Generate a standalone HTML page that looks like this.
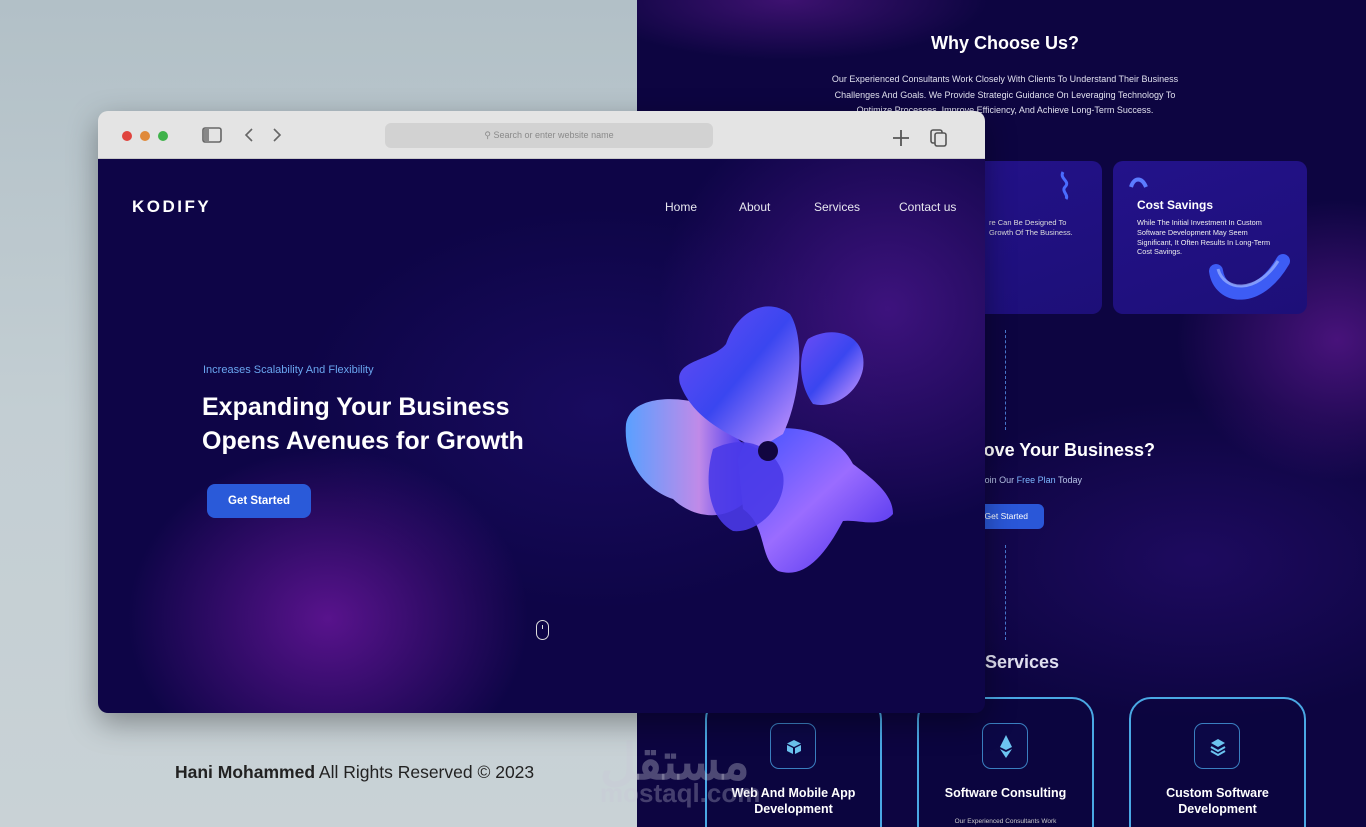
<!DOCTYPE html>
<html><head><meta charset="utf-8"><style>
*{margin:0;padding:0;box-sizing:border-box}
body{width:1366px;height:827px;overflow:hidden;position:relative;font-family:"Liberation Sans",sans-serif;background:linear-gradient(180deg,#b2c0c7 0%,#c3ced3 50%,#c9d2d6 100%)}
.right{position:absolute;left:637px;top:0;width:729px;height:827px;background:
radial-gradient(ellipse 160px 140px at 700px 340px,rgba(120,30,170,.55),transparent),
radial-gradient(ellipse 200px 60px at 150px 0px,rgba(110,30,160,.5),transparent),
radial-gradient(ellipse 300px 160px at 560px 560px,rgba(60,20,150,.35),transparent),
#0d0541;color:#fff;overflow:hidden}
.r{position:absolute}
.card{position:absolute;top:161px;height:153px;border-radius:10px;background:linear-gradient(160deg,#23128a,#1d0f78)}
.svc{position:absolute;top:697px;width:177px;height:160px;border:2px solid #4aa8e4;border-radius:22px;background:rgba(10,5,60,.4)}
.ib{position:absolute;left:63px;top:24px;width:46px;height:46px;border:1px solid #3a7fc0;border-radius:9px;background:#0c0846}
.st{position:absolute;top:86px;left:0;width:100%;text-align:center;font-weight:bold;font-size:12.5px;line-height:16px}
.win{position:absolute;left:98px;top:111px;width:887px;height:602px;border-radius:10px;overflow:hidden;box-shadow:0 10px 30px rgba(0,0,0,.35)}
.bar{position:absolute;left:0;top:0;width:100%;height:48px;background:#e4e4e4;border-bottom:1px solid #c8c8c8}
.content{position:absolute;left:0;top:48px;width:100%;height:554px;background:
radial-gradient(ellipse 200px 170px at 230px 460px,rgba(120,25,170,.7),transparent),
radial-gradient(ellipse 230px 220px at 790px 150px,rgba(100,30,170,.55),transparent),
radial-gradient(ellipse 300px 200px at 500px 250px,rgba(40,20,130,.4),transparent),
#0e0547;color:#fff}
.nav{position:absolute;top:41px;font-size:12px;color:#e8e8f0}
.dot{position:absolute;top:20px;width:10px;height:10px;border-radius:50%}
</style></head><body>
<div class="right">
 <div class="r" style="left:0;width:736px;top:33px;text-align:center;font-weight:bold;font-size:18px">Why Choose Us?</div>
 <div class="r" style="left:180px;width:376px;top:72px;text-align:center;font-size:9px;line-height:15.6px;color:#e0e0ee">Our Experienced Consultants Work Closely With Clients To Understand Their Business Challenges And Goals. We Provide Strategic Guidance On Leveraging Technology To Optimize Processes, Improve Efficiency, And Achieve Long-Term Success.</div>
 <div class="card" style="left:270px;width:195px">
  <div class="r" style="left:82px;top:57px;font-size:7.5px;line-height:10px;color:#ddd">re Can Be Designed To<br>Growth Of The Business.</div>
  <svg class="r" style="left:150px;top:8px" width="20" height="32"><path d="M6 3 C2 10,14 12,8 18 C4 22,12 26,9 30" stroke="#4a6cff" stroke-width="3" fill="none"/></svg>
  <svg class="r" style="left:340px;top:95px" width="40" height="60"><path d="M2 5 C20 10,30 30,10 52" stroke="#6d8cff" stroke-width="6" fill="none" opacity=".8"/></svg>
 </div>
 <div class="card" style="left:476px;width:194px">
  <svg class="r" style="left:15px;top:14px" width="22" height="16"><path d="M3 12 C6 2,14 2,18 12" stroke="#5c7cff" stroke-width="4" fill="none"/></svg>
  <div class="r" style="left:24px;top:37px;font-weight:bold;font-size:12px">Cost Savings</div>
  <div class="r" style="left:24px;top:57px;font-size:7.3px;line-height:9.8px;color:#eee;width:140px">While The Initial Investment In Custom Software Development May Seem Significant, It Often Results In Long-Term Cost Savings.</div>
  <svg class="r" style="left:95px;top:88px" width="85" height="60"><path d="M8 22 C12 50,50 55,75 12" stroke="#3d5cf5" stroke-width="14" fill="none" stroke-linecap="round"/><path d="M10 20 C16 42,48 46,70 12" stroke="#9fb6ff" stroke-width="3" fill="none" opacity=".7"/></svg>
 </div>
 <div class="r" style="left:368px;top:330px;height:100px;border-left:1px dashed #4a7ad0"></div>
 <div class="r" style="left:368px;top:545px;height:95px;border-left:1px dashed #4a7ad0"></div>
 <div class="r" style="right:211px;top:440px;font-weight:bold;font-size:18px;white-space:nowrap">Ready To Improve Your Business?</div>
 <div class="r" style="right:284px;top:475px;font-size:9px;color:#b8c4e8;white-space:nowrap">Join Our <span style="color:#7db7ff">Free Plan</span> Today</div>
 <div class="r" style="left:320px;top:504px;width:87px;height:25px;border-radius:6px;background:#2a57d8;font-size:8.5px;line-height:25px;text-align:right;padding-right:16px">Get Started</div>
 <div class="r" style="left:311px;top:652px;font-weight:bold;font-size:18px;color:#e0e0f0">Our Services</div>
 <div class="svc" style="left:68px"><div class="ib"><svg style="position:absolute;left:15px;top:15px" width="16" height="16"><path d="M8 1 L15 4.5 L8 8 L1 4.5Z M1 6 L7 9 L7 15 L1 12Z M9 9 L15 6 L15 12 L9 15Z" fill="#6cc4f0"/></svg></div><div class="st">Web And Mobile App<br>Development</div></div>
 <div class="svc" style="left:280px"><div class="ib"><svg style="position:absolute;left:16px;top:11px" width="14" height="24"><path d="M7 0 L13 12 L7 15 L1 12Z M1 14 L7 17 L13 14 L7 23Z" fill="#6cc4f0"/></svg></div><div class="st">Software Consulting</div><div class="r" style="top:118px;width:100%;text-align:center;font-size:6.5px;line-height:9px;color:#ccc">Our Experienced Consultants Work<br>Closely With Clients To Understand</div></div>
 <div class="svc" style="left:492px"><div class="ib"><svg style="position:absolute;left:15px;top:14px" width="16" height="18"><path d="M8 1 L15 5 L8 9 L1 5Z" fill="#6cc4f0"/><path d="M1 9 L8 13 L15 9 M1 13 L8 17 L15 13" stroke="#6cc4f0" stroke-width="2" fill="none"/></svg></div><div class="st">Custom Software<br>Development</div></div>
</div>
<div style="position:absolute;left:600px;top:722px;font-size:50px;font-weight:bold;color:rgba(200,200,215,.35);font-family:'Noto Sans CJK SC',sans-serif">مستقل</div>
<div style="position:absolute;left:600px;top:778px;font-size:26px;font-weight:bold;color:rgba(200,200,215,.3)">mostaql.com</div>

<div class="win">
 <div class="bar">
  <div class="dot" style="left:24px;background:#e0443e"></div>
  <div class="dot" style="left:42px;background:#e08a3a"></div>
  <div class="dot" style="left:60px;background:#3fb24a"></div>
  <svg style="position:absolute;left:104px;top:16px" width="20" height="16"><rect x="1" y="1" width="18" height="14" rx="2" fill="none" stroke="#666" stroke-width="1.6"/><rect x="2" y="2" width="5" height="12" fill="#888"/></svg>
  <svg style="position:absolute;left:145px;top:16px" width="40" height="16"><path d="M9 2 L3 8 L9 14" stroke="#666" stroke-width="1.6" fill="none"/><path d="M31 2 L37 8 L31 14" stroke="#666" stroke-width="1.6" fill="none"/></svg>
  <div style="position:absolute;left:287px;top:12px;width:328px;height:25px;border-radius:6px;background:#d2d2d2;text-align:center;font-size:9px;line-height:25px;color:#8a8a8a">⚲ Search or enter website name</div>
  <svg style="position:absolute;left:794px;top:18px" width="18" height="18"><path d="M9 1 V17 M1 9 H17" stroke="#555" stroke-width="1.8"/></svg>
  <svg style="position:absolute;left:831px;top:17px" width="20" height="20"><rect x="2" y="2" width="11" height="13" rx="2" fill="none" stroke="#555" stroke-width="1.6"/><rect x="6" y="5" width="11" height="13" rx="2" fill="#e4e4e4" stroke="#555" stroke-width="1.6"/></svg>
 </div>
 <div class="content">
  <div style="position:absolute;left:34px;top:38px;font-weight:bold;font-size:17px;letter-spacing:2.5px">KODIFY</div>
  <div class="nav" style="left:567px">Home</div>
  <div class="nav" style="left:641px">About</div>
  <div class="nav" style="left:716px">Services</div>
  <div class="nav" style="left:801px">Contact us</div>
  <div style="position:absolute;left:105px;top:205px;font-size:11px;color:#6aa6f0">Increases Scalability And Flexibility</div>
  <div style="position:absolute;left:104px;top:231px;font-weight:bold;font-size:25px;line-height:34px">Expanding Your Business<br>Opens Avenues for Growth</div>
  <div style="position:absolute;left:109px;top:325px;width:104px;height:34px;border-radius:8px;background:#2a5ad9;font-size:11.5px;font-weight:bold;line-height:34px;text-align:center">Get Started</div>
  <div style="position:absolute;left:438px;top:461px;width:13px;height:20px;border:1.5px solid #ddd;border-radius:7px"><div style="position:absolute;left:4.5px;top:4px;width:1.5px;height:4px;background:#ddd"></div></div>
  <svg style="position:absolute;left:520px;top:140px" width="290" height="280">
   <defs>
    <linearGradient id="g1" x1="0" y1="0" x2="1" y2="1"><stop offset="0" stop-color="#3a50ff"/><stop offset=".5" stop-color="#9a6cff"/><stop offset="1" stop-color="#4028e8"/></linearGradient>
    <linearGradient id="g2" x1="0" y1="0" x2="1" y2="0"><stop offset="0" stop-color="#5aa0ff"/><stop offset=".6" stop-color="#c08ae8"/><stop offset="1" stop-color="#3a2ef0"/></linearGradient>
    <linearGradient id="g3" x1="0" y1="0" x2="1" y2="1"><stop offset="0" stop-color="#6a4cf5"/><stop offset=".5" stop-color="#3a46f0"/><stop offset="1" stop-color="#d49cff"/></linearGradient>
   </defs>
   <path d="M190 40 C215 25,250 35,245 70 C240 95,215 110,195 105 C180 85,180 55,190 40Z" fill="url(#g3)"/>
   <path d="M8 125 C12 100,50 95,85 105 L130 150 L125 205 C100 225,70 215,55 200 C25 190,5 160,8 125Z" fill="url(#g2)"/>
   <path d="M130 135 C175 120,220 135,235 165 C255 180,275 195,275 215 C262 230,240 220,225 222 C205 260,185 280,160 272 C140 258,150 228,125 210 L120 160Z" fill="url(#g1)"/>
   <path d="M62 85 C55 60,95 62,108 45 C120 10,150 -2,172 15 C188 40,182 100,165 135 L140 150 C110 135,75 120,62 85Z" fill="url(#g3)"/>
   <path d="M95 150 C125 135,155 145,165 175 C170 205,140 235,115 232 C92 220,85 185,95 150Z" fill="#4a3ae8" opacity=".9"/>
   <circle cx="150" cy="152" r="10" fill="#120640"/>
  </svg>
 </div>
</div>
<div style="position:absolute;left:175px;top:762px;font-size:17.5px;color:#222"><b>Hani Mohammed</b> All Rights Reserved © 2023</div>
</body></html>
